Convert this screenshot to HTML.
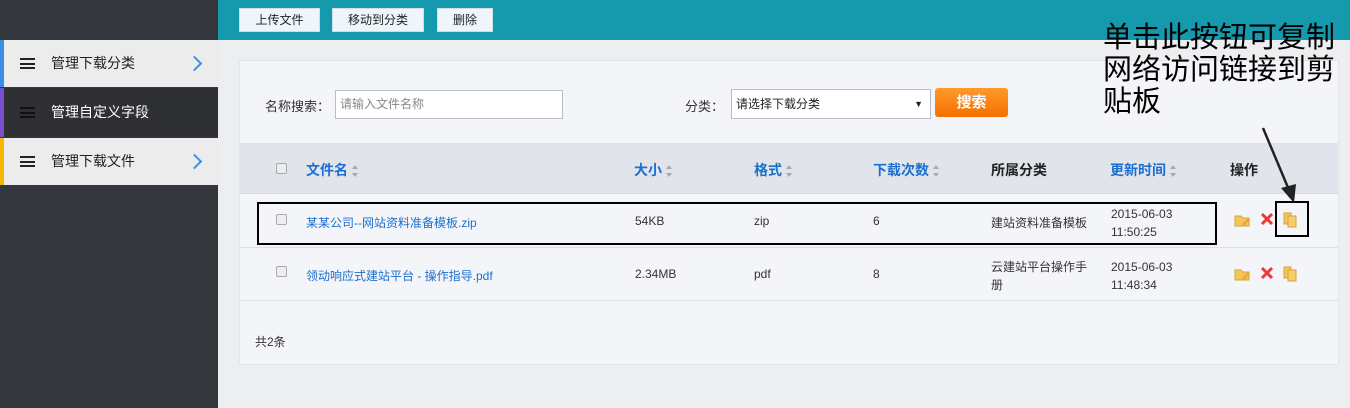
<!DOCTYPE html>
<html><head><meta charset="utf-8"><style>
*{margin:0;padding:0;box-sizing:border-box}
body{width:1350px;height:408px;overflow:hidden;background:#eceef0;font-family:"Liberation Sans","Noto Sans CJK SC",sans-serif;font-size:12px;color:#333;position:relative}
.abs{position:absolute}
.side{left:0;top:0;width:218px;height:408px;background:#34373c}
.item{left:0;width:218px;height:47px;font-size:14px;line-height:47px;padding-left:51px}
.item .bar{position:absolute;left:0;top:0;width:4px;height:100%}
.item .ham{position:absolute;left:20px;top:18px;width:15px;height:11px;border-top:2px solid;border-bottom:2px solid}
.item .ham:after{content:"";position:absolute;left:0;top:2.5px;width:15px;height:2px;background:currentColor}
.chev{position:absolute;left:189px;top:18px;width:11px;height:11px;border-top:2px solid #3d8fe8;border-right:2px solid #3d8fe8;transform:rotate(45deg)}
.top{left:218px;top:0;width:1132px;height:40px;background:#1499ad}
.btn{top:8px;height:24px;background:#eef6fb;border:1px solid #cfdde5;font-size:12px;line-height:22px;text-align:center;color:#222}
.card{left:239px;top:60px;width:1100px;height:305px;background:#f4f5f8;border:1px solid #e2e4e8}
.th{font-size:14px;font-weight:bold;color:#1a6fd0;top:160px}
.sort{display:inline-block;margin-left:4px;vertical-align:middle;width:7px;height:12px;position:relative}
.sort:before,.sort:after{content:"";position:absolute;left:0;border-left:3.5px solid transparent;border-right:3.5px solid transparent}
.sort:before{top:0;border-bottom:4px solid #aaa}
.sort:after{bottom:0;border-top:4px solid #aaa}
.cb{width:11px;height:11px;border:1px solid #aaa;border-radius:2px;background:#eee}
.td{font-size:12px;color:#333}
.lnk{color:#1a6fd0}
</style></head><body>
<div class="abs side"></div>
<div class="abs item" style="top:40px;background:#ececec;color:#222"><div class="bar" style="background:#3a8ee6"></div><div class="ham" style="color:#222"></div>管理下载分类<div class="chev"></div></div>
<div class="abs item" style="top:88px;height:49px;line-height:49px;background:#2e3034;color:#fff"><div class="bar" style="background:#7a4fd0"></div><div class="ham" style="color:#111;top:19px"></div>管理自定义字段</div>
<div class="abs item" style="top:138px;background:#ececec;color:#222"><div class="bar" style="background:#f5b700"></div><div class="ham" style="color:#222"></div>管理下载文件<div class="chev"></div></div>
<div class="abs top"></div>
<div class="abs btn" style="left:239px;width:81px">上传文件</div>
<div class="abs btn" style="left:332px;width:92px">移动到分类</div>
<div class="abs btn" style="left:437px;width:56px">删除</div>
<div class="abs card"></div>
<div class="abs td" style="left:265px;top:96px;font-size:13px">名称搜索：</div>
<div class="abs" style="left:335px;top:90px;width:228px;height:29px;background:#fff;border:1px solid #b9bccb;font-size:12px;color:#888;line-height:27px;padding-left:4px">请输入文件名称</div>
<div class="abs td" style="left:685px;top:96px;font-size:13px">分类：</div>
<div class="abs" style="left:731px;top:89px;width:200px;height:30px;background:#fff;border:1px solid #b9bccb;font-size:12px;color:#222;line-height:28px;padding-left:4px">请选择下载分类<span style="position:absolute;right:7px;font-size:9px">▼</span></div>
<div class="abs" style="left:935px;top:88px;width:73px;height:29px;background:linear-gradient(#ff9a2a,#f46f00);border-radius:3px;color:#fff;font-weight:bold;font-size:15px;line-height:29px;text-align:center">搜索</div>
<div class="abs" style="left:240px;top:143px;width:1098px;height:51px;background:#e1e4eb;border-bottom:1px solid #d8dbe0"></div>
<div class="abs cb" style="left:276px;top:163px"></div>
<div class="abs th" style="left:306px">文件名<span class="sort"></span></div>
<div class="abs th" style="left:634px">大小<span class="sort"></span></div>
<div class="abs th" style="left:754px">格式<span class="sort"></span></div>
<div class="abs th" style="left:873px">下载次数<span class="sort"></span></div>
<div class="abs th" style="left:991px;color:#222">所属分类</div>
<div class="abs th" style="left:1110px">更新时间<span class="sort" style=""></span></div>
<div class="abs th" style="left:1230px;color:#222">操作</div>
<div class="abs" style="left:240px;top:247px;width:1098px;height:1px;background:#dde0e4"></div>
<div class="abs" style="left:240px;top:300px;width:1098px;height:1px;background:#dde0e4"></div>
<div class="abs cb" style="left:276px;top:214px"></div>
<div class="abs td lnk" style="left:306px;top:214px">某某公司--网站资料准备模板.zip</div>
<div class="abs td" style="left:635px;top:214px">54KB</div>
<div class="abs td" style="left:754px;top:214px">zip</div>
<div class="abs td" style="left:873px;top:214px">6</div>
<div class="abs td" style="left:991px;top:214px">建站资料准备模板</div>
<div class="abs td" style="left:1111px;top:205px;line-height:18px">2015-06-03<br>11:50:25</div>
<div class="abs cb" style="left:276px;top:266px"></div>
<div class="abs td lnk" style="left:306px;top:267px">领动响应式建站平台 - 操作指导.pdf</div>
<div class="abs td" style="left:635px;top:267px">2.34MB</div>
<div class="abs td" style="left:754px;top:267px">pdf</div>
<div class="abs td" style="left:873px;top:267px">8</div>
<div class="abs td" style="left:991px;top:258px;line-height:18px">云建站平台操作手<br>册</div>
<div class="abs td" style="left:1111px;top:258px;line-height:18px">2015-06-03<br>11:48:34</div>
<div class="abs td" style="left:255px;top:333px">共2条</div>
<svg class="abs" style="left:0;top:0" width="1350" height="408">
<g id="ic">
<path d="M1235 216 h6 l2 2 h6 v8 h-14z" fill="#f3c65a" stroke="#d9a23a"/>
<path d="M1242 224 l6 -6 l2 2 l-6 6 z" fill="#e9a93a"/>
<path d="M1262 214 l10 10 M1272 214 l-10 10" stroke="#e83a3a" stroke-width="3"/>
<rect x="1284" y="213" width="7" height="11" fill="#f3c65a" stroke="#d9a23a"/>
<rect x="1288" y="216" width="8" height="11" fill="#f6cf6a" stroke="#d9a23a"/>
</g>
<use href="#ic" y="54"/>
<rect x="258" y="203" width="958" height="41" fill="none" stroke="#000" stroke-width="2"/>
<rect x="1276" y="202" width="32" height="34" fill="none" stroke="#000" stroke-width="2"/>
<line x1="1263" y1="128" x2="1289" y2="190" stroke="#222" stroke-width="2.5"/>
<path d="M1281 188 L1294 203 L1296 184 Z" fill="#222"/>
</svg>
<div class="abs" style="left:1103px;top:19px;font-size:29px;line-height:32px;color:#000;font-family:'WenQuanYi Zen Hei','Noto Sans CJK SC',sans-serif;width:250px;white-space:nowrap">单击此按钮可复制<br>网络访问链接到剪<br>贴板</div>
</body></html>
